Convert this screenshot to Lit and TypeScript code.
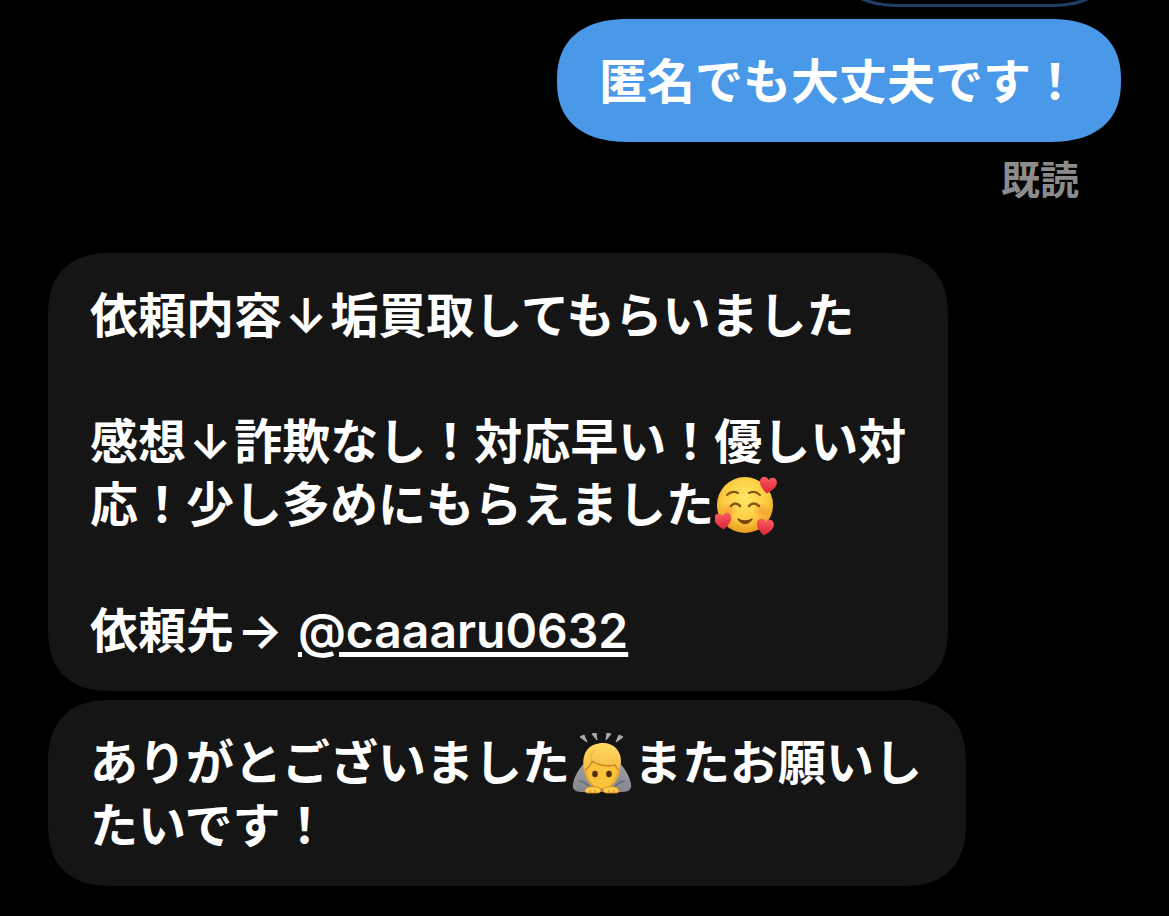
import { LitElement, html, css, svg } from "lit";
import { customElement } from "lit/decorators.js";

const heart = (x: number, y: number, r: number, s: number) => svg`
  <path transform="translate(${x} ${y}) rotate(${r}) scale(${s})"
    d="M0 9C-4 6-9 2-9-3C-9-9-2-10 0-5C2-10 9-9 9-3C9 2 4 6 0 9Z" fill="url(#heart)" />`;

@customElement("app-root")
export class AppRoot extends LitElement {
  static styles = css`
    :host {
      display: block;
      font-family: Inter, "Noto Sans CJK JP", sans-serif;
      font-size: 48px;
      font-weight: 600;
      line-height: 63px;
      color: #fff;
      background: #000;
    }
    .thread {
      box-sizing: border-box;
      height: 100vh;
      overflow: hidden;
      display: flex;
      flex-direction: column;
      justify-content: flex-end;
      padding: 0 48px 30px;
    }
    .bubble {
      flex: none;
      box-sizing: border-box;
      max-width: 918px;
      margin: 0;
      padding: 31px 42px 29px;
      border-radius: 64px;
      corner-shape: superellipse(1.3);
      background: #151515;
      align-self: flex-start;
      white-space: pre-wrap;
      word-break: break-all;
    }
    .bubble + .bubble {
      margin-top: 9px;
    }
    .sent {
      align-self: flex-end;
      background: #4a99e9;
      border-radius: 72px / 61px;
      corner-shape: superellipse(1.25);
    }
    .outline {
      width: 292px;
      height: 123px;
      margin-bottom: 3px;
      background: none;
      border: 3px solid #1d3f62;
    }
    .status {
      flex: none;
      align-self: flex-end;
      margin: 14px 42px 49px;
      font-size: 39px;
      line-height: 48px;
      color: #8c8c8c;
    }
    a {
      color: inherit;
      text-decoration: underline;
      text-decoration-thickness: 5px;
      text-underline-offset: 4px;
    }
    .arrow {
      margin: 0 3px;
    }
    .emoji {
      width: 62px;
      height: 62px;
      margin: -8px 1px;
      vertical-align: -7px;
    }
  `;

  private lovingFace() {
    return html`<svg class="emoji" viewBox="0 0 62 62" role="img" aria-label="🥰">
      <defs>
        <radialGradient id="face" cx="50%" cy="38%" r="62%">
          <stop offset="0" stop-color="#ffe766" />
          <stop offset=".65" stop-color="#fbcb3f" />
          <stop offset="1" stop-color="#e99a20" />
        </radialGradient>
        <radialGradient id="blush">
          <stop offset="0" stop-color="#f5762e" stop-opacity=".5" />
          <stop offset="1" stop-color="#f5762e" stop-opacity="0" />
        </radialGradient>
        <linearGradient id="heart" x1="0" y1="0" x2="0" y2="1">
          <stop offset="0" stop-color="#fb5a60" />
          <stop offset="1" stop-color="#dc2439" />
        </linearGradient>
      </defs>
      <circle cx="30" cy="30" r="28" fill="url(#face)" />
      <ellipse cx="13" cy="36" rx="9" ry="8" fill="url(#blush)" />
      <ellipse cx="47" cy="36" rx="9" ry="8" fill="url(#blush)" />
      <g fill="none" stroke="#8a5310" stroke-linecap="round">
        <path d="M12 20Q17 15 23 18M34 18Q40 15 45 20" stroke-width="2" />
        <path d="M16 31Q20.500 26 25 31M34 31Q38.500 26 44 31" stroke-width="2.600" />
      </g>
      <path d="M23 44Q30 48 37 44Q30 53 23 44Z" fill="#7b430d" stroke="#7b430d" stroke-width="1.400" stroke-linejoin="round" />
      ${heart(53, 10, 8, 0.95)}
      ${heart(8, 46, -6, 0.95)}
      ${heart(50, 52, 8, 0.95)}
    </svg>`;
  }

  private bowingPerson() {
    return html`<svg class="emoji" viewBox="0 0 62 62" role="img" aria-label="🙇">
      <defs>
        <linearGradient id="hair" x1="0" y1="0" x2="0" y2="1">
          <stop offset="0" stop-color="#ffdc62" />
          <stop offset="1" stop-color="#f5bb45" />
        </linearGradient>
        <linearGradient id="sleeve" x1="0" y1="0" x2="0" y2="1">
          <stop offset="0" stop-color="#a0a2a8" />
          <stop offset="1" stop-color="#85878d" />
        </linearGradient>
      </defs>
      <path d="M9 4L13 2L16 9ZM21 1L25 0L26 7ZM36 0L40 1L35 7ZM48 2L52 4L45 9Z" fill="#a9abae" stroke="#a9abae" stroke-width="1" stroke-linejoin="round" />
      <path d="M16 28C9 33 3 44 2 51C1 56 4 59 10 59L52 59C58 59 61 56 60 51C59 44 53 33 46 28Z" fill="url(#sleeve)" />
      <path d="M8 48Q15 49 19 55M54 48Q47 49 43 55" fill="none" stroke="#686b71" stroke-width="1.500" />
      <path d="M13 30C12 45 20 56 31 56S50 45 49 30Z" fill="#eea82c" />
      <path d="M15 30C15 44 21 55 31 55S47 44 47 30Z" fill="#fbc23c" />
      <path d="M14 37C11 32 12 22 16 17C20 12 26 10 32 10C43 10 50 18 50 28C50 32 49 35 48 37C46 36 45 34 44 32C36 34 27 32 21 28C20 32 17 35 14 37Z" fill="url(#hair)" />
      <path d="M14 37C17 35 20 32 21 28C27 32 36 34 44 32C45 34 46 36 48 37" fill="none" stroke="#cf841c" stroke-width="1.400" />
      <path d="M21 28C19 24 20 20 24 17" fill="none" stroke="#eab03e" stroke-width="1.200" />
      <ellipse cx="24" cy="41" rx="2.800" ry="3.200" fill="#54300f" />
      <ellipse cx="38" cy="41" rx="2.800" ry="3.200" fill="#54300f" />
      <path d="M14 58C14 54 20 53 25 54C29 54 30 56 30 58C29 60 27 60 25 60L17 60C15 60 14 59 14 58ZM48 58C48 54 42 53 37 54C33 54 32 56 32 58C33 60 35 60 37 60L45 60C47 60 48 59 48 58Z" fill="#ffcb48" stroke="#d18a20" stroke-width=".8" />
      <path d="M19 57V60M24 57V60M38 57V60M43 57V60" stroke="#c9811d" stroke-width="1" />
    </svg>`;
  }

  render() {
    return html`<main class="thread">
      <div class="bubble sent outline"></div>
      <p class="bubble sent">匿名でも大丈夫です！</p>
      <div class="status">既読</div>
      <p class="bubble">依頼内容<span class="arrow">↓</span>垢買取してもらいました

感想<span class="arrow">↓</span>詐欺なし！対応早い！優しい対
応！少し多めにもらえました${this.lovingFace()}

依頼先<span class="arrow">→</span> <a href="#caaaru0632">@caaaru0632</a></p>
      <p class="bubble">ありがとございました${this.bowingPerson()}またお願いしたいです！</p>
    </main>`;
  }
}
